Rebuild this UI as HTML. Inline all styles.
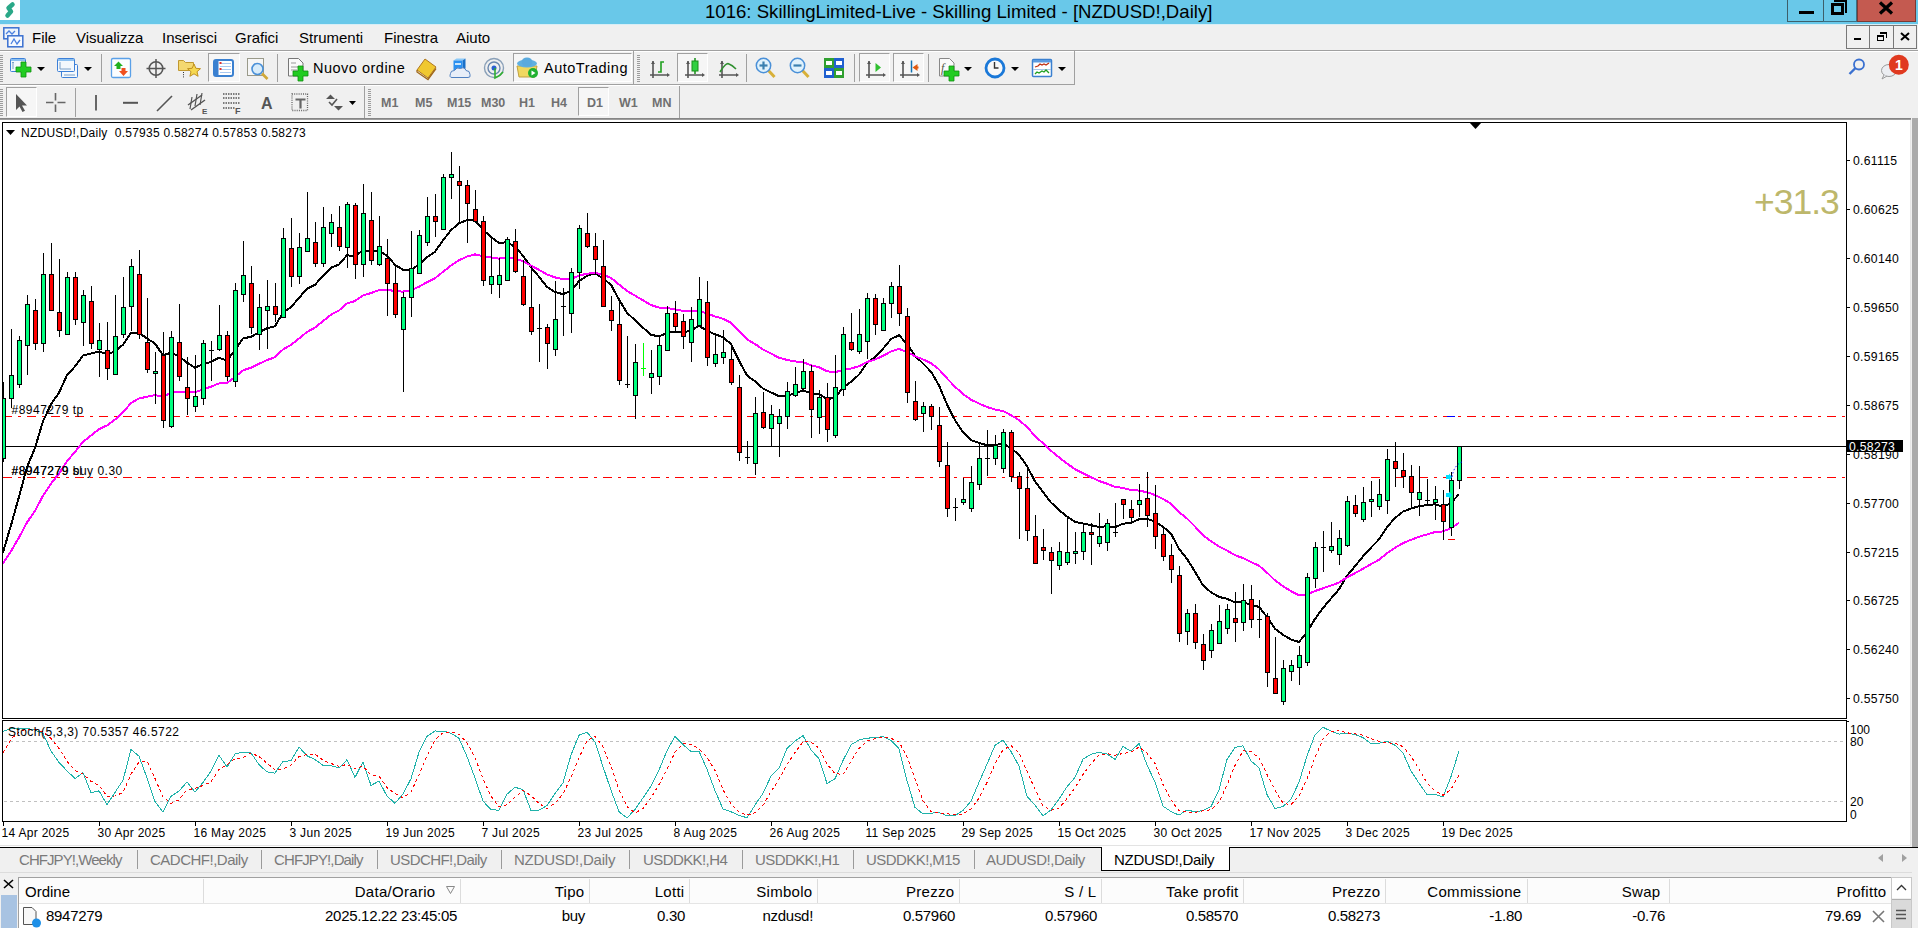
<!DOCTYPE html>
<html><head><meta charset="utf-8">
<style>
*{margin:0;padding:0;box-sizing:border-box}
html,body{width:1918px;height:928px;overflow:hidden;background:#f0f0f0;font-family:"Liberation Sans",sans-serif;color:#000}
.a{position:absolute}
.t{position:absolute;white-space:nowrap;line-height:1}
#title{left:0;top:0;width:1918px;height:24px;background:#69c8e9}
.menu{font-size:15px;top:30px}
.tf{font-size:12.5px;font-weight:bold;color:#707070;top:97px}
.sep{position:absolute;width:1px;background:#a0a0a0}
.pl{font-size:12.2px;left:1853px;letter-spacing:0.3px}
.tl{font-size:12px;top:827px;letter-spacing:0.3px}
.tab{font-size:15px;letter-spacing:-0.3px;color:#7a7a7a;top:852px}
.tsep{position:absolute;top:850px;width:1px;height:19px;background:#9a9a9a}
.th{font-size:15px;top:884px}
.td{font-size:15px;top:907.5px;letter-spacing:-0.3px}
.cdiv{position:absolute;top:879px;width:1px;height:24px;background:#dcdcdc}
</style></head><body>
<!-- title bar -->
<div class="a" id="title"></div>
<div class="a" style="left:0;top:0;width:20px;height:20px;background:#fff"></div>
<svg class="a" style="left:0;top:0" width="20" height="20"><path d="M12.5,4.5 L8.5,8 L11,11.5 L7.5,15.5" fill="none" stroke="#2aa888" stroke-width="4.5" stroke-linejoin="round" stroke-linecap="round"/></svg>
<div class="t" style="left:705px;top:3px;font-size:18.6px">1016: SkillingLimited-Live - Skilling Limited - [NZDUSD!,Daily]</div>
<div class="a" style="left:1787px;top:0;width:37px;height:22px;border:1px solid #3d5f6a;border-top:none"></div>
<div class="a" style="left:1799px;top:11px;width:15px;height:3px;background:#000"></div>
<div class="a" style="left:1823px;top:0;width:34px;height:22px;border:1px solid #3d6f82;border-top:none;border-left:none"></div>
<div class="a" style="left:1831px;top:3px;width:13px;height:12px;border:3px solid #000"></div>
<div class="a" style="left:1834px;top:-1px;width:13px;height:14px;border-top:3px solid #000;border-right:2px solid #000"></div>
<div class="a" style="left:1857px;top:0;width:59px;height:22px;background:#c45a50;border:1px solid #7a3a34;border-top:none"></div>
<svg class="a" style="left:1878px;top:1px" width="16" height="14"><path d="M2,1.5 L14,12.5 M14,1.5 L2,12.5" stroke="#000" stroke-width="3.2"/></svg>

<!-- menu bar -->
<div class="a" style="left:0;top:24px;width:1918px;height:1px;background:#d8eef6"></div>
<svg class="a" style="left:3px;top:27px" width="21" height="21">
<rect x="0.8" y="0.8" width="15" height="11" fill="#eef4fc" stroke="#3a70d0" stroke-width="1.5"/><rect x="4.8" y="8.8" width="15" height="11" fill="#f6f9fe" stroke="#3a70d0" stroke-width="1.5"/>
<path d="M3,7 L6,4 L9,7 L12,4" stroke="#4a80e0" fill="none" stroke-width="1.3"/><path d="M8,17 L11,12 L14,17 L17,13" stroke="#4a80e0" fill="none" stroke-width="1.3"/></svg>
<div class="t menu" style="left:32px">File</div>
<div class="t menu" style="left:76px">Visualizza</div>
<div class="t menu" style="left:162px">Inserisci</div>
<div class="t menu" style="left:235px">Grafici</div>
<div class="t menu" style="left:299px">Strumenti</div>
<div class="t menu" style="left:384px">Finestra</div>
<div class="t menu" style="left:456px">Aiuto</div>
<div class="a" style="left:1846px;top:25px;width:24px;height:24px;border:1px solid #777"></div>
<div class="a" style="left:1869px;top:25px;width:25px;height:24px;border:1px solid #777"></div>
<div class="a" style="left:1893px;top:25px;width:24px;height:24px;border:1px solid #777"></div>
<div class="a" style="left:1854px;top:38px;width:7px;height:2px;background:#000"></div>
<div class="a" style="left:1877px;top:35px;width:7px;height:6px;border:1px solid #000;border-top-width:2px"></div>
<div class="a" style="left:1880px;top:32px;width:7px;height:6px;border-top:2px solid #000;border-right:1px solid #000"></div>
<svg class="a" style="left:1900px;top:32px" width="10" height="9"><path d="M1,1 L9,8 M9,1 L1,8" stroke="#000" stroke-width="2"/></svg>
<div class="a" style="left:0;top:50px;width:1918px;height:1px;background:#a0a0a0"></div>

<!-- toolbar 1 -->
<div class="a" style="left:0;top:51px;width:1918px;height:1px;background:#fff"></div>
<div class="a" style="left:1074px;top:51px;width:1px;height:33px;background:#a0a0a0"></div>
<div class="a" style="left:0px;top:55px;width:3px;height:27px;background:repeating-linear-gradient(#9c9c9c 0 1px,transparent 1px 2px)"></div>
<div class="a" style="left:101px;top:54px;width:1px;height:28px;background:#a0a0a0"></div>
<div class="a" style="left:208px;top:53px;width:32px;height:29px;border-top:1px solid #a0a0a0;border-left:1px solid #a0a0a0;border-right:1px solid #fff;border-bottom:1px solid #fff;background:#f6f6f6"></div>
<div class="a" style="left:277px;top:54px;width:1px;height:28px;background:#a0a0a0"></div>
<div class="a" style="left:513px;top:53px;width:119px;height:29px;border-top:1px solid #a0a0a0;border-left:1px solid #a0a0a0;border-right:1px solid #fff;border-bottom:1px solid #fff;background:#f6f6f6"></div>
<div class="a" style="left:633px;top:51px;width:1px;height:33px;background:#a0a0a0"></div>
<div class="a" style="left:637px;top:55px;width:3px;height:27px;background:repeating-linear-gradient(#9c9c9c 0 1px,transparent 1px 2px)"></div>
<div class="a" style="left:677px;top:53px;width:31px;height:29px;border-top:1px solid #a0a0a0;border-left:1px solid #a0a0a0;border-right:1px solid #fff;border-bottom:1px solid #fff;background:#f6f6f6"></div>
<div class="a" style="left:746px;top:54px;width:1px;height:28px;background:#a0a0a0"></div>
<div class="a" style="left:854px;top:54px;width:1px;height:28px;background:#a0a0a0"></div>
<div class="a" style="left:859px;top:53px;width:31px;height:29px;border-top:1px solid #a0a0a0;border-left:1px solid #a0a0a0;border-right:1px solid #fff;border-bottom:1px solid #fff;background:#f6f6f6"></div>
<div class="a" style="left:893px;top:53px;width:31px;height:29px;border-top:1px solid #a0a0a0;border-left:1px solid #a0a0a0;border-right:1px solid #fff;border-bottom:1px solid #fff;background:#f6f6f6"></div>
<div class="a" style="left:928px;top:54px;width:1px;height:28px;background:#a0a0a0"></div>
<div class="t" style="left:313px;top:61px;font-size:14.5px;letter-spacing:0.5px;color:#000">Nuovo ordine</div>
<div class="t" style="left:544px;top:61px;font-size:14.5px;letter-spacing:0.5px;color:#000">AutoTrading</div>
<svg class="a" style="left:0;top:0" width="1918" height="85"><rect x="10.5" y="58.5" width="15" height="13" rx="1" fill="#f4f8fc" stroke="#3d80d8"/><rect x="11" y="59" width="14" height="2" fill="#8cc0f0"/><path d="M13,62 v7 M12,63 l1,-1 l1,1" stroke="#7aa0c8" fill="none"/><path d="M21,62 h5 v5 h5 v5 h-5 v5 h-5 v-5 h-5 v-5 h5 z" fill="#22cc22" stroke="#109010" stroke-width="0.8"/><path d="M37,67 h8 l-4,4 z" fill="#000"/><rect x="61.5" y="64.5" width="16" height="13" rx="1" fill="#f4f8fc" stroke="#3d80d8"/><rect x="57.5" y="58.5" width="17" height="13" rx="1" fill="#f4f8fc" stroke="#3d80d8"/><rect x="58" y="59" width="16" height="2" fill="#8cc0f0"/><path d="M60,62 v7 h11 M64,75 h11" stroke="#7aa0c8" fill="none"/><path d="M84,67 h8 l-4,4 z" fill="#000"/><rect x="111.5" y="58.5" width="19" height="19" rx="1.5" fill="#fbfdff" stroke="#5aa0e8" stroke-width="1.3"/><path d="M114,66 l4.5,-4.5 l4.5,4.5 h-2.5 v3 h-4 v-3 z" fill="#20b020"/><path d="M119,71 h2.5 v-3 h4 v3 h2.5 l-4.5,5 z" fill="#f05020"/><circle cx="156" cy="68.5" r="6.8" fill="none" stroke="#555" stroke-width="1.6"/><path d="M156,59 v19 M146.5,68.5 h19" stroke="#555" stroke-width="1.5"/><path d="M178.5,60.5 h5 l2,2 h8 v8 h-15 z" fill="#f4d870" stroke="#c09830"/><path d="M194,64 l1.9,4.3 4.6,.4 -3.5,3 1.1,4.6 -4.1,-2.5 -4.1,2.5 1.1,-4.6 -3.5,-3 4.6,-.4 z" fill="#f6d850" stroke="#c09020"/><path d="M183.5,72 v6" stroke="#333" stroke-dasharray="1,1.2"/><rect x="214" y="60" width="19" height="16" rx="2" fill="#fff" stroke="#3a80d0" stroke-width="2"/><rect x="214" y="60" width="4.5" height="16" fill="#3a80d0"/><path d="M220,63.5 h11 M220,66.5 h11 M220,69.5 h11 M220,72.5 h11" stroke="#a8c8f0"/><rect x="219.5" y="62" width="2" height="2" fill="#e03030"/><rect x="219.5" y="68" width="2" height="2" fill="#e03030"/><rect x="247.5" y="58.5" width="16" height="17" fill="#f6f6f6" stroke="#9a9a8a"/><circle cx="257.5" cy="69" r="5.5" fill="#d8ecfa" stroke="#4a90d8" stroke-width="1.6"/><path d="M262,73.5 l5.5,5.5" stroke="#d0a838" stroke-width="2.6"/><path d="M288.5,58.5 h10 l4.5,4.5 v13 h-14.5 z" fill="#fafafa" stroke="#777"/><path d="M291,63 h5 M291,67 h8 M291,70 h6" stroke="#999"/><path d="M298,66 h5 v5 h5 v5 h-5 v5 h-5 v-5 h-5 v-5 h5 z" fill="#22cc22" stroke="#109010" stroke-width="0.8"/><path d="M417,70 l8,-11 l11,8 l-8,11 z" fill="#f0c830" stroke="#b07820"/><path d="M417,70 l0,2 l11,7.5 l8,-11" fill="none" stroke="#a06818" stroke-width="1.3"/><path d="M453.5,60.5 l3,-2 h9 l-3,2 z" fill="#8ccaf8"/><path d="M465.5,58.5 v10 l-3,2 v-10 z" fill="#1a70c8"/><rect x="453.5" y="60.5" width="9" height="10" fill="#2a90f0"/><rect x="455" y="63" width="6" height="2" fill="#c8e4fc"/><path d="M452,77.5 q-3,0 -1.5,-4 q0,-3 4,-3 q2,-4 6,-2 q4,-2 5.5,2 q4,0 4,4 q1,3 -2,3 z" fill="#e8eef8" stroke="#5080c0"/><circle cx="494" cy="68" r="9.5" fill="none" stroke="#8aa0b8" stroke-width="1.4"/><circle cx="494" cy="68" r="6" fill="none" stroke="#6a88b0" stroke-width="1.4"/><circle cx="494" cy="68" r="2.5" fill="#2a60d0"/><path d="M495,68 v10 q5,-2 8,-6" stroke="#30b030" stroke-width="1.6" fill="none"/><path d="M519,77 l-2,-11 h20 l-2,11 z" fill="#f0d860" stroke="#c0a040"/><ellipse cx="527" cy="63.5" rx="10" ry="4" fill="#60b0e0"/><ellipse cx="527" cy="62" rx="5.5" ry="4.5" fill="#5aaade"/><circle cx="533" cy="73" r="5" fill="#20b030"/><path d="M531.5,70.5 l4,2.5 l-4,2.5 z" fill="#fff"/><path d="M653,61 v17 M650,75 h17" stroke="#555" stroke-width="1.6"/><path d="M651,64 l2,-3 l2,3 z M667,73 l3,2 l-3,2 z" fill="#555"/><path d="M658,72 h3 v-10 h3" stroke="#20a020" stroke-width="1.6" fill="none"/><path d="M688,61 v17 M685,75 h17" stroke="#555" stroke-width="1.6"/><path d="M686,64 l2,-3 l2,3 z M702,73 l3,2 l-3,2 z" fill="#555"/><rect x="692" y="61" width="6" height="10" fill="#30d040" stroke="#189018"/><path d="M695,58 v3 M695,71 v3" stroke="#189018" stroke-width="1.5"/><path d="M722,61 v17 M719,75 h17" stroke="#555" stroke-width="1.6"/><path d="M720,64 l2,-3 l2,3 z M736,73 l3,2 l-3,2 z" fill="#555"/><path d="M720,72 q6,-10 9,-8 q3,1 7,5" stroke="#309030" stroke-width="1.6" fill="none"/><path d="M767.5,69.5 l7,7.5" stroke="#d8b038" stroke-width="3"/><circle cx="763.5" cy="65.5" r="7.2" fill="#e0f2fc" stroke="#4a90d8" stroke-width="1.5"/><path d="M759.5,65.5 h8" stroke="#3a80b0" stroke-width="2.2"/><path d="M763.5,61.5 v8" stroke="#3a80b0" stroke-width="2.2"/><path d="M801.5,69.5 l7,7.5" stroke="#d8b038" stroke-width="3"/><circle cx="797.5" cy="65.5" r="7.2" fill="#e0f2fc" stroke="#4a90d8" stroke-width="1.5"/><path d="M793.5,65.5 h8" stroke="#3a80b0" stroke-width="2.2"/><rect x="824" y="58" width="10" height="10" fill="#30a030"/><rect x="834" y="58" width="10" height="10" fill="#2060d0"/><rect x="824" y="68" width="10" height="10" fill="#2060d0"/><rect x="834" y="68" width="10" height="10" fill="#30a030"/><path d="M826,61 h6 v4 h-6 z M836,61 h6 v4 h-6 z M826,71 h6 v4 h-6 z M836,71 h6 v4 h-6 z" fill="#fff"/><path d="M869,61 v17 M866,75 h17" stroke="#555" stroke-width="1.6"/><path d="M867,64 l2,-3 l2,3 z M883,73 l3,2 l-3,2 z" fill="#555"/><path d="M875.5,63 l5.5,4.5 l-5.5,4.5 z" fill="#30c030"/><path d="M903,61 v17 M900,75 h17" stroke="#555" stroke-width="1.6"/><path d="M901,64 l2,-3 l2,3 z M917,73 l3,2 l-3,2 z" fill="#555"/><path d="M911.5,60.5 v12" stroke="#1070b0" stroke-width="1.5"/><path d="M912.5,67.5 l5,-3.5 v2.5 h1 v2 h-1 v2.5 z" fill="#e05a10"/><path d="M939.5,58.5 h10 l4.5,4.5 v13 h-14.5 z" fill="#fafafa" stroke="#888"/><text x="941" y="72" font-family="Liberation Serif" font-size="12" font-style="italic" fill="#554">f</text><path d="M949,66 h5 v5 h5 v5 h-5 v5 h-5 v-5 h-5 v-5 h5 z" fill="#22cc22" stroke="#109010" stroke-width="0.8"/><path d="M964,67 h8 l-4,4 z" fill="#000"/><circle cx="995" cy="68" r="9" fill="#f8f8f8" stroke="#1a78d8" stroke-width="2.8"/><path d="M994.5,62 v6 h4" stroke="#333" stroke-width="1.4" fill="none"/><path d="M1011,67 h8 l-4,4 z" fill="#000"/><rect x="1032.5" y="59.5" width="19" height="17" rx="1" fill="#fff" stroke="#3a80d0" stroke-width="1.5"/><rect x="1033" y="60" width="18" height="2.5" fill="#5a9ae0"/><path d="M1033,69.5 h18" stroke="#a8c8e8"/><path d="M1035,67 l3,-1 l2,-2 l2,1 l2,-1 l2,1 l3,-2" stroke="#c03010" stroke-width="1.3" fill="none"/><path d="M1035,74 l2,-2 l2,1 l3,-2 l2,1 l2,-2 l3,3" stroke="#20a020" stroke-width="1.3" fill="none"/><path d="M1058,67 h8 l-4,4 z" fill="#000"/><circle cx="1859" cy="64.5" r="5" fill="none" stroke="#3a70d0" stroke-width="1.8"/><path d="M1855.5,68 l-6,6" stroke="#3a70d0" stroke-width="2.4"/><ellipse cx="1889" cy="70.5" rx="7.5" ry="6" fill="#eceef2" stroke="#9a9a9a"/><path d="M1884,75 l-2,4 l5,-3" fill="#eceef2" stroke="#9a9a9a"/><circle cx="1898.8" cy="64.8" r="10" fill="#e03a20"/><text x="1898.8" y="70" font-family="Liberation Sans" font-weight="bold" font-size="14" fill="#fff" text-anchor="middle">1</text></svg>
<div class="a" style="left:0;top:84px;width:1075px;height:1px;background:#a0a0a0"></div>
<!-- toolbar 2 -->
<div class="a" style="left:0;top:85px;width:680px;height:1px;background:#fff"></div>
<div class="a" style="left:0px;top:89px;width:3px;height:27px;background:repeating-linear-gradient(#9c9c9c 0 1px,transparent 1px 2px)"></div>
<div class="a" style="left:6px;top:87px;width:31px;height:30px;border-top:1px solid #a0a0a0;border-left:1px solid #a0a0a0;border-right:1px solid #fff;border-bottom:1px solid #fff;background:#f6f6f6"></div>
<div class="a" style="left:75px;top:88px;width:1px;height:29px;background:#a0a0a0"></div>
<div class="a" style="left:364px;top:86px;width:1px;height:32px;background:#a0a0a0"></div>
<div class="a" style="left:368px;top:89px;width:3px;height:27px;background:repeating-linear-gradient(#9c9c9c 0 1px,transparent 1px 2px)"></div>
<div class="a" style="left:578px;top:87px;width:31px;height:29px;border-top:1px solid #a0a0a0;border-left:1px solid #a0a0a0;border-right:1px solid #fff;border-bottom:1px solid #fff;background:#f6f6f6"></div>
<div class="a" style="left:679px;top:86px;width:1px;height:32px;background:#a0a0a0"></div>
<div class="t tf" style="left:381px">M1</div>
<div class="t tf" style="left:415px">M5</div>
<div class="t tf" style="left:447px">M15</div>
<div class="t tf" style="left:481px">M30</div>
<div class="t tf" style="left:519px">H1</div>
<div class="t tf" style="left:551px">H4</div>
<div class="t tf" style="left:587px">D1</div>
<div class="t tf" style="left:619px">W1</div>
<div class="t tf" style="left:652px">MN</div>
<svg class="a" style="left:0;top:0" width="1918" height="120"><path d="M16,94 v16 l3.5,-3.5 l3,5.5 l2.5,-1.3 l-3,-5.2 h5 z" fill="#555"/><path d="M55.5,93 v7.5 M55.5,104.5 v7.5 M46,102.5 h7.5 M57.5,102.5 h8" stroke="#666" stroke-width="1.6"/><path d="M96,95 v15.5" stroke="#666" stroke-width="2"/><path d="M123,102.8 h15" stroke="#555" stroke-width="2"/><path d="M157,111 l15,-15" stroke="#555" stroke-width="1.6"/><path d="M188,105 l14,-10 M191,110 l14,-10" stroke="#555" stroke-width="1.5"/><path d="M192,97 l-2,12 M197,94 l-2,12 M202,93 l-2,12" stroke="#555" stroke-width="1.2"/><text x="202" y="114" font-family="Liberation Sans" font-weight="bold" font-size="8" fill="#555">E</text><path d="M223,94 h17 M223,98 h17 M223,103 h17 M223,108 h12" stroke="#555" stroke-width="1.4" stroke-dasharray="1.5,1"/><text x="235" y="114" font-family="Liberation Sans" font-weight="bold" font-size="9" fill="#555">F</text><text x="261" y="109" font-family="Liberation Sans" font-weight="bold" font-size="16" fill="#555">A</text><rect x="292" y="94" width="15.5" height="16.5" fill="none" stroke="#666" stroke-width="1.3" stroke-dasharray="1,1.2"/><path d="M295.5,99.5 h10 M300.5,99.5 v9" stroke="#666" stroke-width="2.2"/><path d="M326,99 l4.5,-4.5 l4.5,4.5 z M334,106 l4.5,4.5 l4.5,-4.5 z" fill="#555"/><path d="M329,102 l3,3 l5,-6" stroke="#555" stroke-width="1.6" fill="none"/><path d="M349,101 h7 l-3.5,4 z" fill="#000"/></svg>

<!-- MDI frame -->
<div class="a" style="left:0;top:118px;width:1911px;height:2px;background:linear-gradient(#7a7a7a,#a8a8a8)"></div>
<div class="a" style="left:0;top:120px;width:1910px;height:727px;background:#fff"></div>
<div class="a" style="left:0;top:845px;width:1910px;height:1px;background:#e3e3e3"></div>
<div class="a" style="left:1910px;top:120px;width:1px;height:726px;background:#e6e6e6"></div>
<div class="a" style="left:1912px;top:118px;width:6px;height:729px;background:#ababab"></div>

<svg class="a" style="left:0;top:0" width="1918" height="928">
<rect x="2.5" y="122.5" width="1844" height="596" fill="none" stroke="#000"/>
<rect x="2.5" y="720.5" width="1844" height="101" fill="none" stroke="#000"/>
<g id="ticks" stroke="#000"><line x1="1846" y1="160.5" x2="1850" y2="160.5"/>
<line x1="1846" y1="209.5" x2="1850" y2="209.5"/>
<line x1="1846" y1="258.5" x2="1850" y2="258.5"/>
<line x1="1846" y1="307.5" x2="1850" y2="307.5"/>
<line x1="1846" y1="356.5" x2="1850" y2="356.5"/>
<line x1="1846" y1="405.5" x2="1850" y2="405.5"/>
<line x1="1846" y1="454.5" x2="1850" y2="454.5"/>
<line x1="1846" y1="503.5" x2="1850" y2="503.5"/>
<line x1="1846" y1="552.5" x2="1850" y2="552.5"/>
<line x1="1846" y1="600.5" x2="1850" y2="600.5"/>
<line x1="1846" y1="649.5" x2="1850" y2="649.5"/>
<line x1="1846" y1="698.5" x2="1850" y2="698.5"/>
<line x1="1846" y1="721.5" x2="1849" y2="721.5"/>
<line x1="3.5" y1="822" x2="3.5" y2="826"/>
<line x1="99.5" y1="822" x2="99.5" y2="826"/>
<line x1="195.5" y1="822" x2="195.5" y2="826"/>
<line x1="291.5" y1="822" x2="291.5" y2="826"/>
<line x1="387.5" y1="822" x2="387.5" y2="826"/>
<line x1="483.5" y1="822" x2="483.5" y2="826"/>
<line x1="579.5" y1="822" x2="579.5" y2="826"/>
<line x1="675.5" y1="822" x2="675.5" y2="826"/>
<line x1="771.5" y1="822" x2="771.5" y2="826"/>
<line x1="867.5" y1="822" x2="867.5" y2="826"/>
<line x1="963.5" y1="822" x2="963.5" y2="826"/>
<line x1="1059.5" y1="822" x2="1059.5" y2="826"/>
<line x1="1155.5" y1="822" x2="1155.5" y2="826"/>
<line x1="1251.5" y1="822" x2="1251.5" y2="826"/>
<line x1="1347.5" y1="822" x2="1347.5" y2="826"/>
<line x1="1443.5" y1="822" x2="1443.5" y2="826"/></g>
<line x1="3" y1="801.5" x2="1846" y2="801.5" stroke="#c0c0c0" stroke-dasharray="3,3" stroke-dashoffset="5"/>
<line x1="3" y1="741.5" x2="1846" y2="741.5" stroke="#c0c0c0" stroke-dasharray="3,3" stroke-dashoffset="5"/>
<line x1="3" y1="416.5" x2="1846" y2="416.5" stroke="#ff0000" stroke-dasharray="9,6,3,6"/>
<line x1="3" y1="477.5" x2="1846" y2="477.5" stroke="#ff0000" stroke-dasharray="9,6,3,6"/>
<line x1="3" y1="446.5" x2="1846" y2="446.5" stroke="#000"/>
<svg x="3" y="123" width="1843" height="595" viewBox="3 123 1843 595" overflow="hidden">
<polyline points="3.0,552.4 11.0,525.2 19.0,496.7 27.0,467.1 35.0,448.0 43.0,421.3 51.0,404.2 59.0,392.8 67.0,375.1 75.0,366.5 83.0,355.5 91.0,353.6 99.0,351.6 107.0,354.1 115.0,351.4 123.0,344.7 131.0,332.6 139.0,332.8 147.0,338.5 155.0,343.5 163.0,355.4 171.0,352.6 179.0,356.2 187.0,362.7 195.0,367.8 203.0,364.0 211.0,361.9 219.0,357.8 227.0,360.7 235.0,349.9 243.0,338.4 251.0,336.8 259.0,332.3 267.0,328.3 275.0,326.2 283.0,312.6 291.0,307.1 299.0,297.9 307.0,288.7 315.0,284.8 323.0,275.9 331.0,267.7 339.0,264.5 347.0,255.2 355.0,256.7 363.0,250.0 371.0,251.5 379.0,250.8 387.0,255.7 395.0,264.8 403.0,269.9 411.0,269.7 419.0,264.5 427.0,257.2 435.0,251.7 443.0,240.3 451.0,230.2 459.0,223.3 467.0,220.2 475.0,220.5 483.0,229.7 491.0,236.9 499.0,242.9 507.0,242.3 515.0,246.9 523.0,255.7 531.0,267.3 539.0,276.7 547.0,286.9 555.0,292.0 563.0,294.2 571.0,290.8 579.0,281.2 587.0,275.9 595.0,273.3 603.0,278.4 611.0,284.8 619.0,299.6 627.0,312.7 635.0,320.3 643.0,327.7 651.0,334.8 659.0,336.4 667.0,332.9 675.0,331.9 683.0,332.6 691.0,330.6 699.0,325.8 707.0,330.7 715.0,334.3 723.0,337.1 731.0,344.1 739.0,360.7 747.0,375.5 755.0,381.3 763.0,388.4 771.0,392.4 779.0,396.1 787.0,395.4 795.0,393.7 803.0,390.3 811.0,393.3 819.0,393.9 827.0,399.3 835.0,397.5 843.0,387.8 851.0,381.9 859.0,374.6 867.0,362.9 875.0,357.0 883.0,348.7 891.0,339.1 899.0,335.2 907.0,344.0 915.0,355.7 923.0,363.5 931.0,371.6 939.0,385.4 947.0,404.4 955.0,420.2 963.0,432.4 971.0,440.1 979.0,442.9 987.0,445.3 995.0,445.3 1003.0,443.4 1011.0,448.5 1019.0,454.6 1027.0,466.3 1035.0,481.2 1043.0,491.9 1051.0,502.5 1059.0,510.0 1067.0,516.5 1075.0,521.9 1083.0,523.5 1091.0,525.2 1099.0,526.9 1107.0,526.3 1115.0,527.2 1123.0,523.7 1131.0,522.8 1139.0,519.3 1147.0,518.8 1155.0,521.5 1163.0,526.9 1171.0,533.5 1179.0,548.9 1187.0,558.8 1195.0,571.7 1203.0,585.4 1211.0,592.3 1219.0,596.9 1227.0,598.8 1235.0,602.4 1243.0,602.1 1251.0,604.7 1259.0,606.9 1267.0,617.0 1275.0,628.7 1283.0,634.8 1291.0,639.5 1299.0,642.0 1307.0,632.0 1315.0,619.0 1323.0,608.0 1331.0,598.5 1339.0,589.3 1347.0,575.8 1355.0,566.2 1363.0,556.4 1371.0,547.6 1379.0,539.4 1387.0,527.1 1395.0,518.0 1403.0,511.6 1411.0,508.6 1419.0,506.1 1427.0,505.2 1435.0,504.3 1443.0,506.9 1451.0,502.9 1459.0,494.2" fill="none" stroke="#000" stroke-width="2" stroke-linejoin="round" shape-rendering="crispEdges"/><polyline points="3.0,563.2 11.0,551.1 19.0,537.5 27.0,522.4 35.0,510.9 43.0,495.6 51.0,483.6 59.0,473.7 67.0,461.1 75.0,451.9 83.0,441.8 91.0,435.5 99.0,429.3 107.0,425.4 115.0,419.6 123.0,412.4 131.0,403.0 139.0,398.5 147.0,396.7 155.0,395.0 163.0,396.7 171.0,392.8 179.0,391.8 187.0,392.2 195.0,392.4 203.0,389.3 211.0,386.7 219.0,383.4 227.0,383.0 235.0,377.0 243.0,370.4 251.0,367.7 259.0,363.8 267.0,360.1 275.0,357.2 283.0,349.5 291.0,344.8 299.0,338.5 307.0,332.0 315.0,327.6 323.0,321.1 331.0,314.7 339.0,310.4 347.0,303.5 355.0,301.0 363.0,295.4 371.0,293.1 379.0,290.1 387.0,289.6 395.0,291.2 403.0,291.6 411.0,290.2 419.0,286.7 427.0,282.2 435.0,278.2 443.0,271.8 451.0,265.5 459.0,260.3 467.0,256.6 475.0,254.4 483.0,256.1 491.0,257.4 499.0,258.6 507.0,257.3 515.0,258.3 523.0,261.2 531.0,265.7 539.0,269.8 547.0,274.5 555.0,277.4 563.0,279.3 571.0,278.9 579.0,275.6 587.0,273.7 595.0,272.8 603.0,274.9 611.0,277.8 619.0,284.5 627.0,291.0 635.0,295.6 643.0,300.3 651.0,305.0 659.0,307.6 667.0,308.0 675.0,309.2 683.0,311.0 691.0,311.5 699.0,310.7 707.0,313.7 715.0,316.4 723.0,318.7 731.0,322.8 739.0,331.1 747.0,339.3 755.0,344.0 763.0,349.4 771.0,353.6 779.0,357.7 787.0,359.9 795.0,361.4 803.0,362.1 811.0,365.2 819.0,367.2 827.0,371.2 835.0,372.3 843.0,369.8 851.0,368.5 859.0,366.3 867.0,362.0 875.0,359.5 883.0,355.9 891.0,351.4 899.0,349.0 907.0,351.8 915.0,356.2 923.0,359.4 931.0,363.1 939.0,369.4 947.0,378.4 955.0,386.7 963.0,394.0 971.0,399.7 979.0,403.5 987.0,407.0 995.0,409.5 1003.0,411.0 1011.0,415.2 1019.0,420.0 1027.0,427.1 1035.0,435.9 1043.0,443.3 1051.0,450.8 1059.0,457.3 1067.0,463.5 1075.0,469.2 1083.0,473.2 1091.0,477.2 1099.0,481.0 1107.0,483.7 1115.0,486.8 1123.0,488.0 1131.0,489.9 1139.0,490.6 1147.0,492.2 1155.0,495.0 1163.0,499.0 1171.0,503.6 1179.0,512.0 1187.0,518.5 1195.0,526.5 1203.0,535.2 1211.0,541.3 1219.0,546.5 1227.0,550.6 1235.0,555.2 1243.0,558.1 1251.0,562.0 1259.0,565.7 1267.0,572.6 1275.0,580.4 1283.0,586.1 1291.0,591.2 1299.0,595.3 1307.0,594.2 1315.0,591.1 1323.0,588.3 1331.0,585.6 1339.0,582.6 1347.0,577.4 1355.0,573.2 1363.0,568.7 1371.0,564.2 1379.0,559.7 1387.0,553.2 1395.0,547.7 1403.0,543.1 1411.0,539.8 1419.0,536.7 1427.0,534.4 1435.0,532.1 1443.0,531.4 1451.0,528.2 1459.0,522.9" fill="none" stroke="#ff00ff" stroke-width="2" stroke-linejoin="round" shape-rendering="crispEdges"/>
<rect x="3" y="382" width="1" height="80" fill="#000"/>
<rect x="1" y="398" width="5" height="61" fill="#000"/>
<rect x="2" y="399" width="3" height="59" fill="#00ff7f"/>
<rect x="11" y="329" width="1" height="79" fill="#000"/>
<rect x="9" y="375" width="5" height="24" fill="#000"/>
<rect x="10" y="376" width="3" height="22" fill="#00ff7f"/>
<rect x="19" y="336" width="1" height="52" fill="#000"/>
<rect x="17" y="340" width="5" height="45" fill="#000"/>
<rect x="18" y="341" width="3" height="43" fill="#00ff7f"/>
<rect x="27" y="295" width="1" height="80" fill="#000"/>
<rect x="25" y="304" width="5" height="42" fill="#000"/>
<rect x="26" y="305" width="3" height="40" fill="#00ff7f"/>
<rect x="35" y="299" width="1" height="51" fill="#000"/>
<rect x="33" y="310" width="5" height="34" fill="#000"/>
<rect x="34" y="311" width="3" height="32" fill="#ff0000"/>
<rect x="43" y="253" width="1" height="99" fill="#000"/>
<rect x="41" y="274" width="5" height="70" fill="#000"/>
<rect x="42" y="275" width="3" height="68" fill="#00ff7f"/>
<rect x="51" y="243" width="1" height="68" fill="#000"/>
<rect x="49" y="274" width="5" height="37" fill="#000"/>
<rect x="50" y="275" width="3" height="35" fill="#ff0000"/>
<rect x="59" y="259" width="1" height="78" fill="#000"/>
<rect x="57" y="312" width="5" height="19" fill="#000"/>
<rect x="58" y="313" width="3" height="17" fill="#ff0000"/>
<rect x="67" y="272" width="1" height="63" fill="#000"/>
<rect x="65" y="277" width="5" height="58" fill="#000"/>
<rect x="66" y="278" width="3" height="56" fill="#00ff7f"/>
<rect x="75" y="272" width="1" height="53" fill="#000"/>
<rect x="73" y="277" width="5" height="43" fill="#000"/>
<rect x="74" y="278" width="3" height="41" fill="#ff0000"/>
<rect x="83" y="290" width="1" height="56" fill="#000"/>
<rect x="81" y="295" width="5" height="28" fill="#000"/>
<rect x="82" y="296" width="3" height="26" fill="#00ff7f"/>
<rect x="91" y="286" width="1" height="63" fill="#000"/>
<rect x="89" y="301" width="5" height="43" fill="#000"/>
<rect x="90" y="302" width="3" height="41" fill="#ff0000"/>
<rect x="99" y="323" width="1" height="54" fill="#000"/>
<rect x="97" y="340" width="5" height="10" fill="#000"/>
<rect x="98" y="341" width="3" height="8" fill="#00ff7f"/>
<rect x="107" y="322" width="1" height="58" fill="#000"/>
<rect x="105" y="350" width="5" height="19" fill="#000"/>
<rect x="106" y="351" width="3" height="17" fill="#ff0000"/>
<rect x="115" y="295" width="1" height="80" fill="#000"/>
<rect x="113" y="336" width="5" height="39" fill="#000"/>
<rect x="114" y="337" width="3" height="37" fill="#00ff7f"/>
<rect x="123" y="277" width="1" height="61" fill="#000"/>
<rect x="121" y="307" width="5" height="28" fill="#000"/>
<rect x="122" y="308" width="3" height="26" fill="#00ff7f"/>
<rect x="131" y="259" width="1" height="72" fill="#000"/>
<rect x="129" y="266" width="5" height="41" fill="#000"/>
<rect x="130" y="267" width="3" height="39" fill="#00ff7f"/>
<rect x="139" y="250" width="1" height="89" fill="#000"/>
<rect x="137" y="274" width="5" height="61" fill="#000"/>
<rect x="138" y="275" width="3" height="59" fill="#ff0000"/>
<rect x="147" y="298" width="1" height="75" fill="#000"/>
<rect x="145" y="342" width="5" height="28" fill="#000"/>
<rect x="146" y="343" width="3" height="26" fill="#ff0000"/>
<rect x="155" y="352" width="1" height="52" fill="#000"/>
<rect x="153" y="371" width="5" height="3" fill="#000"/>
<rect x="154" y="372" width="3" height="1" fill="#00ff7f"/>
<rect x="163" y="332" width="1" height="96" fill="#000"/>
<rect x="161" y="355" width="5" height="66" fill="#000"/>
<rect x="162" y="356" width="3" height="64" fill="#ff0000"/>
<rect x="171" y="331" width="1" height="97" fill="#000"/>
<rect x="169" y="337" width="5" height="90" fill="#000"/>
<rect x="170" y="338" width="3" height="88" fill="#00ff7f"/>
<rect x="179" y="304" width="1" height="77" fill="#000"/>
<rect x="177" y="342" width="5" height="35" fill="#000"/>
<rect x="178" y="343" width="3" height="33" fill="#ff0000"/>
<rect x="187" y="357" width="1" height="58" fill="#000"/>
<rect x="185" y="387" width="5" height="12" fill="#000"/>
<rect x="186" y="388" width="3" height="10" fill="#ff0000"/>
<rect x="195" y="355" width="1" height="57" fill="#000"/>
<rect x="193" y="396" width="5" height="11" fill="#000"/>
<rect x="194" y="397" width="3" height="9" fill="#00ff7f"/>
<rect x="203" y="340" width="1" height="65" fill="#000"/>
<rect x="201" y="343" width="5" height="56" fill="#000"/>
<rect x="202" y="344" width="3" height="54" fill="#00ff7f"/>
<rect x="211" y="341" width="1" height="40" fill="#000"/>
<rect x="209" y="350" width="5" height="1" fill="#000"/>
<rect x="219" y="305" width="1" height="46" fill="#000"/>
<rect x="217" y="335" width="5" height="15" fill="#000"/>
<rect x="218" y="336" width="3" height="13" fill="#00ff7f"/>
<rect x="227" y="331" width="1" height="50" fill="#000"/>
<rect x="225" y="335" width="5" height="42" fill="#000"/>
<rect x="226" y="336" width="3" height="40" fill="#ff0000"/>
<rect x="235" y="283" width="1" height="104" fill="#000"/>
<rect x="233" y="290" width="5" height="92" fill="#000"/>
<rect x="234" y="291" width="3" height="90" fill="#00ff7f"/>
<rect x="243" y="241" width="1" height="61" fill="#000"/>
<rect x="241" y="275" width="5" height="20" fill="#000"/>
<rect x="242" y="276" width="3" height="18" fill="#00ff7f"/>
<rect x="251" y="266" width="1" height="68" fill="#000"/>
<rect x="249" y="283" width="5" height="45" fill="#000"/>
<rect x="250" y="284" width="3" height="43" fill="#ff0000"/>
<rect x="259" y="294" width="1" height="56" fill="#000"/>
<rect x="257" y="307" width="5" height="28" fill="#000"/>
<rect x="258" y="308" width="3" height="26" fill="#00ff7f"/>
<rect x="267" y="280" width="1" height="69" fill="#000"/>
<rect x="265" y="306" width="5" height="5" fill="#000"/>
<rect x="266" y="307" width="3" height="3" fill="#00ff7f"/>
<rect x="275" y="283" width="1" height="39" fill="#000"/>
<rect x="273" y="306" width="5" height="9" fill="#000"/>
<rect x="274" y="307" width="3" height="7" fill="#ff0000"/>
<rect x="283" y="228" width="1" height="90" fill="#000"/>
<rect x="281" y="238" width="5" height="80" fill="#000"/>
<rect x="282" y="239" width="3" height="78" fill="#00ff7f"/>
<rect x="291" y="218" width="1" height="69" fill="#000"/>
<rect x="289" y="248" width="5" height="29" fill="#000"/>
<rect x="290" y="249" width="3" height="27" fill="#ff0000"/>
<rect x="299" y="233" width="1" height="51" fill="#000"/>
<rect x="297" y="247" width="5" height="30" fill="#000"/>
<rect x="298" y="248" width="3" height="28" fill="#00ff7f"/>
<rect x="307" y="192" width="1" height="60" fill="#000"/>
<rect x="305" y="238" width="5" height="14" fill="#000"/>
<rect x="306" y="239" width="3" height="12" fill="#00ff7f"/>
<rect x="315" y="222" width="1" height="45" fill="#000"/>
<rect x="313" y="242" width="5" height="22" fill="#000"/>
<rect x="314" y="243" width="3" height="20" fill="#ff0000"/>
<rect x="323" y="207" width="1" height="60" fill="#000"/>
<rect x="321" y="227" width="5" height="37" fill="#000"/>
<rect x="322" y="228" width="3" height="35" fill="#00ff7f"/>
<rect x="331" y="214" width="1" height="33" fill="#000"/>
<rect x="329" y="222" width="5" height="12" fill="#000"/>
<rect x="330" y="223" width="3" height="10" fill="#00ff7f"/>
<rect x="339" y="206" width="1" height="45" fill="#000"/>
<rect x="337" y="227" width="5" height="20" fill="#000"/>
<rect x="338" y="228" width="3" height="18" fill="#ff0000"/>
<rect x="347" y="202" width="1" height="66" fill="#000"/>
<rect x="345" y="204" width="5" height="44" fill="#000"/>
<rect x="346" y="205" width="3" height="42" fill="#00ff7f"/>
<rect x="355" y="203" width="1" height="76" fill="#000"/>
<rect x="353" y="205" width="5" height="60" fill="#000"/>
<rect x="354" y="206" width="3" height="58" fill="#ff0000"/>
<rect x="363" y="184" width="1" height="93" fill="#000"/>
<rect x="361" y="213" width="5" height="52" fill="#000"/>
<rect x="362" y="214" width="3" height="50" fill="#00ff7f"/>
<rect x="371" y="192" width="1" height="73" fill="#000"/>
<rect x="369" y="220" width="5" height="41" fill="#000"/>
<rect x="370" y="221" width="3" height="39" fill="#ff0000"/>
<rect x="379" y="216" width="1" height="50" fill="#000"/>
<rect x="377" y="246" width="5" height="19" fill="#000"/>
<rect x="378" y="247" width="3" height="17" fill="#00ff7f"/>
<rect x="387" y="239" width="1" height="77" fill="#000"/>
<rect x="385" y="258" width="5" height="26" fill="#000"/>
<rect x="386" y="259" width="3" height="24" fill="#ff0000"/>
<rect x="395" y="264" width="1" height="54" fill="#000"/>
<rect x="393" y="283" width="5" height="32" fill="#000"/>
<rect x="394" y="284" width="3" height="30" fill="#ff0000"/>
<rect x="403" y="292" width="1" height="100" fill="#000"/>
<rect x="401" y="297" width="5" height="33" fill="#000"/>
<rect x="402" y="298" width="3" height="31" fill="#00ff7f"/>
<rect x="411" y="231" width="1" height="86" fill="#000"/>
<rect x="409" y="268" width="5" height="30" fill="#000"/>
<rect x="410" y="269" width="3" height="28" fill="#00ff7f"/>
<rect x="419" y="230" width="1" height="44" fill="#000"/>
<rect x="417" y="235" width="5" height="39" fill="#000"/>
<rect x="418" y="236" width="3" height="37" fill="#00ff7f"/>
<rect x="427" y="197" width="1" height="49" fill="#000"/>
<rect x="425" y="216" width="5" height="27" fill="#000"/>
<rect x="426" y="217" width="3" height="25" fill="#00ff7f"/>
<rect x="435" y="194" width="1" height="43" fill="#000"/>
<rect x="433" y="216" width="5" height="6" fill="#000"/>
<rect x="434" y="217" width="3" height="4" fill="#ff0000"/>
<rect x="443" y="174" width="1" height="56" fill="#000"/>
<rect x="441" y="177" width="5" height="53" fill="#000"/>
<rect x="442" y="178" width="3" height="51" fill="#00ff7f"/>
<rect x="451" y="152" width="1" height="47" fill="#000"/>
<rect x="449" y="174" width="5" height="4" fill="#000"/>
<rect x="450" y="175" width="3" height="2" fill="#00ff7f"/>
<rect x="459" y="166" width="1" height="57" fill="#000"/>
<rect x="457" y="181" width="5" height="5" fill="#000"/>
<rect x="458" y="182" width="3" height="3" fill="#ff0000"/>
<rect x="467" y="180" width="1" height="63" fill="#000"/>
<rect x="465" y="185" width="5" height="19" fill="#000"/>
<rect x="466" y="186" width="3" height="17" fill="#ff0000"/>
<rect x="475" y="190" width="1" height="33" fill="#000"/>
<rect x="473" y="209" width="5" height="13" fill="#000"/>
<rect x="474" y="210" width="3" height="11" fill="#ff0000"/>
<rect x="483" y="216" width="1" height="70" fill="#000"/>
<rect x="481" y="221" width="5" height="60" fill="#000"/>
<rect x="482" y="222" width="3" height="58" fill="#ff0000"/>
<rect x="491" y="237" width="1" height="57" fill="#000"/>
<rect x="489" y="276" width="5" height="9" fill="#000"/>
<rect x="490" y="277" width="3" height="7" fill="#00ff7f"/>
<rect x="499" y="258" width="1" height="40" fill="#000"/>
<rect x="497" y="275" width="5" height="10" fill="#000"/>
<rect x="498" y="276" width="3" height="8" fill="#00ff7f"/>
<rect x="507" y="237" width="1" height="44" fill="#000"/>
<rect x="505" y="239" width="5" height="42" fill="#000"/>
<rect x="506" y="240" width="3" height="40" fill="#00ff7f"/>
<rect x="515" y="229" width="1" height="44" fill="#000"/>
<rect x="513" y="241" width="5" height="31" fill="#000"/>
<rect x="514" y="242" width="3" height="29" fill="#ff0000"/>
<rect x="523" y="260" width="1" height="46" fill="#000"/>
<rect x="521" y="276" width="5" height="29" fill="#000"/>
<rect x="522" y="277" width="3" height="27" fill="#ff0000"/>
<rect x="531" y="266" width="1" height="69" fill="#000"/>
<rect x="529" y="307" width="5" height="25" fill="#000"/>
<rect x="530" y="308" width="3" height="23" fill="#ff0000"/>
<rect x="539" y="304" width="1" height="58" fill="#000"/>
<rect x="537" y="328" width="5" height="1" fill="#000"/>
<rect x="547" y="324" width="1" height="45" fill="#000"/>
<rect x="545" y="327" width="5" height="17" fill="#000"/>
<rect x="546" y="328" width="3" height="15" fill="#ff0000"/>
<rect x="555" y="281" width="1" height="75" fill="#000"/>
<rect x="553" y="319" width="5" height="31" fill="#000"/>
<rect x="554" y="320" width="3" height="29" fill="#00ff7f"/>
<rect x="563" y="288" width="1" height="48" fill="#000"/>
<rect x="561" y="306" width="5" height="1" fill="#000"/>
<rect x="571" y="268" width="1" height="65" fill="#000"/>
<rect x="569" y="272" width="5" height="42" fill="#000"/>
<rect x="570" y="273" width="3" height="40" fill="#00ff7f"/>
<rect x="579" y="225" width="1" height="64" fill="#000"/>
<rect x="577" y="228" width="5" height="45" fill="#000"/>
<rect x="578" y="229" width="3" height="43" fill="#00ff7f"/>
<rect x="587" y="213" width="1" height="35" fill="#000"/>
<rect x="585" y="233" width="5" height="14" fill="#000"/>
<rect x="586" y="234" width="3" height="12" fill="#ff0000"/>
<rect x="595" y="233" width="1" height="42" fill="#000"/>
<rect x="593" y="246" width="5" height="14" fill="#000"/>
<rect x="594" y="247" width="3" height="12" fill="#ff0000"/>
<rect x="603" y="240" width="1" height="67" fill="#000"/>
<rect x="601" y="266" width="5" height="41" fill="#000"/>
<rect x="602" y="267" width="3" height="39" fill="#ff0000"/>
<rect x="611" y="296" width="1" height="35" fill="#000"/>
<rect x="609" y="310" width="5" height="11" fill="#000"/>
<rect x="610" y="311" width="3" height="9" fill="#ff0000"/>
<rect x="619" y="299" width="1" height="86" fill="#000"/>
<rect x="617" y="324" width="5" height="57" fill="#000"/>
<rect x="618" y="325" width="3" height="55" fill="#ff0000"/>
<rect x="627" y="336" width="1" height="52" fill="#000"/>
<rect x="625" y="384" width="5" height="1" fill="#000"/>
<rect x="635" y="344" width="1" height="75" fill="#000"/>
<rect x="633" y="362" width="5" height="34" fill="#000"/>
<rect x="634" y="363" width="3" height="32" fill="#00ff7f"/>
<rect x="643" y="343" width="1" height="33" fill="#00ff00"/>
<rect x="641" y="368" width="5" height="1" fill="#00ff00"/>
<rect x="651" y="350" width="1" height="44" fill="#000"/>
<rect x="649" y="373" width="5" height="5" fill="#000"/>
<rect x="650" y="374" width="3" height="3" fill="#00ff7f"/>
<rect x="659" y="336" width="1" height="49" fill="#000"/>
<rect x="657" y="345" width="5" height="32" fill="#000"/>
<rect x="658" y="346" width="3" height="30" fill="#00ff7f"/>
<rect x="667" y="306" width="1" height="45" fill="#000"/>
<rect x="665" y="313" width="5" height="38" fill="#000"/>
<rect x="666" y="314" width="3" height="36" fill="#00ff7f"/>
<rect x="675" y="301" width="1" height="30" fill="#000"/>
<rect x="673" y="313" width="5" height="14" fill="#000"/>
<rect x="674" y="314" width="3" height="12" fill="#ff0000"/>
<rect x="683" y="314" width="1" height="35" fill="#000"/>
<rect x="681" y="321" width="5" height="16" fill="#000"/>
<rect x="682" y="322" width="3" height="14" fill="#ff0000"/>
<rect x="691" y="307" width="1" height="55" fill="#000"/>
<rect x="689" y="319" width="5" height="24" fill="#000"/>
<rect x="690" y="320" width="3" height="22" fill="#00ff7f"/>
<rect x="699" y="277" width="1" height="50" fill="#000"/>
<rect x="697" y="299" width="5" height="27" fill="#000"/>
<rect x="698" y="300" width="3" height="25" fill="#00ff7f"/>
<rect x="707" y="281" width="1" height="85" fill="#000"/>
<rect x="705" y="302" width="5" height="56" fill="#000"/>
<rect x="706" y="303" width="3" height="54" fill="#ff0000"/>
<rect x="715" y="336" width="1" height="31" fill="#000"/>
<rect x="713" y="354" width="5" height="10" fill="#000"/>
<rect x="714" y="355" width="3" height="8" fill="#00ff7f"/>
<rect x="723" y="330" width="1" height="34" fill="#000"/>
<rect x="721" y="352" width="5" height="6" fill="#000"/>
<rect x="722" y="353" width="3" height="4" fill="#00ff7f"/>
<rect x="731" y="346" width="1" height="39" fill="#000"/>
<rect x="729" y="359" width="5" height="24" fill="#000"/>
<rect x="730" y="360" width="3" height="22" fill="#ff0000"/>
<rect x="739" y="375" width="1" height="86" fill="#000"/>
<rect x="737" y="387" width="5" height="66" fill="#000"/>
<rect x="738" y="388" width="3" height="64" fill="#ff0000"/>
<rect x="747" y="441" width="1" height="23" fill="#000"/>
<rect x="745" y="457" width="5" height="1" fill="#000"/>
<rect x="755" y="397" width="1" height="78" fill="#000"/>
<rect x="753" y="413" width="5" height="51" fill="#000"/>
<rect x="754" y="414" width="3" height="49" fill="#00ff7f"/>
<rect x="763" y="392" width="1" height="37" fill="#000"/>
<rect x="761" y="412" width="5" height="16" fill="#000"/>
<rect x="762" y="413" width="3" height="14" fill="#ff0000"/>
<rect x="771" y="405" width="1" height="42" fill="#000"/>
<rect x="769" y="414" width="5" height="15" fill="#000"/>
<rect x="770" y="415" width="3" height="13" fill="#00ff7f"/>
<rect x="779" y="409" width="1" height="48" fill="#000"/>
<rect x="777" y="416" width="5" height="8" fill="#000"/>
<rect x="778" y="417" width="3" height="6" fill="#00ff7f"/>
<rect x="787" y="382" width="1" height="47" fill="#000"/>
<rect x="785" y="391" width="5" height="26" fill="#000"/>
<rect x="786" y="392" width="3" height="24" fill="#00ff7f"/>
<rect x="795" y="367" width="1" height="30" fill="#000"/>
<rect x="793" y="384" width="5" height="12" fill="#000"/>
<rect x="794" y="385" width="3" height="10" fill="#00ff7f"/>
<rect x="803" y="359" width="1" height="31" fill="#000"/>
<rect x="801" y="371" width="5" height="18" fill="#000"/>
<rect x="802" y="372" width="3" height="16" fill="#00ff7f"/>
<rect x="811" y="365" width="1" height="73" fill="#000"/>
<rect x="809" y="371" width="5" height="39" fill="#000"/>
<rect x="810" y="372" width="3" height="37" fill="#ff0000"/>
<rect x="819" y="390" width="1" height="44" fill="#000"/>
<rect x="817" y="397" width="5" height="21" fill="#000"/>
<rect x="818" y="398" width="3" height="19" fill="#00ff7f"/>
<rect x="827" y="383" width="1" height="59" fill="#000"/>
<rect x="825" y="397" width="5" height="33" fill="#000"/>
<rect x="826" y="398" width="3" height="31" fill="#ff0000"/>
<rect x="835" y="355" width="1" height="83" fill="#000"/>
<rect x="833" y="387" width="5" height="49" fill="#000"/>
<rect x="834" y="388" width="3" height="47" fill="#00ff7f"/>
<rect x="843" y="327" width="1" height="69" fill="#000"/>
<rect x="841" y="334" width="5" height="56" fill="#000"/>
<rect x="842" y="335" width="3" height="54" fill="#00ff7f"/>
<rect x="851" y="313" width="1" height="38" fill="#000"/>
<rect x="849" y="342" width="5" height="8" fill="#000"/>
<rect x="850" y="343" width="3" height="6" fill="#ff0000"/>
<rect x="859" y="309" width="1" height="45" fill="#000"/>
<rect x="857" y="334" width="5" height="18" fill="#000"/>
<rect x="858" y="335" width="3" height="16" fill="#00ff7f"/>
<rect x="867" y="293" width="1" height="66" fill="#000"/>
<rect x="865" y="298" width="5" height="44" fill="#000"/>
<rect x="866" y="299" width="3" height="42" fill="#00ff7f"/>
<rect x="875" y="294" width="1" height="41" fill="#000"/>
<rect x="873" y="298" width="5" height="27" fill="#000"/>
<rect x="874" y="299" width="3" height="25" fill="#ff0000"/>
<rect x="883" y="298" width="1" height="33" fill="#000"/>
<rect x="881" y="303" width="5" height="28" fill="#000"/>
<rect x="882" y="304" width="3" height="26" fill="#00ff7f"/>
<rect x="891" y="282" width="1" height="36" fill="#000"/>
<rect x="889" y="286" width="5" height="18" fill="#000"/>
<rect x="890" y="287" width="3" height="16" fill="#00ff7f"/>
<rect x="899" y="265" width="1" height="61" fill="#000"/>
<rect x="897" y="286" width="5" height="28" fill="#000"/>
<rect x="898" y="287" width="3" height="26" fill="#ff0000"/>
<rect x="907" y="308" width="1" height="95" fill="#000"/>
<rect x="905" y="316" width="5" height="77" fill="#000"/>
<rect x="906" y="317" width="3" height="75" fill="#ff0000"/>
<rect x="915" y="381" width="1" height="40" fill="#000"/>
<rect x="913" y="401" width="5" height="19" fill="#000"/>
<rect x="914" y="402" width="3" height="17" fill="#ff0000"/>
<rect x="923" y="402" width="1" height="30" fill="#000"/>
<rect x="921" y="406" width="5" height="8" fill="#000"/>
<rect x="922" y="407" width="3" height="6" fill="#00ff7f"/>
<rect x="931" y="404" width="1" height="26" fill="#000"/>
<rect x="929" y="406" width="5" height="11" fill="#000"/>
<rect x="930" y="407" width="3" height="9" fill="#ff0000"/>
<rect x="939" y="407" width="1" height="60" fill="#000"/>
<rect x="937" y="425" width="5" height="37" fill="#000"/>
<rect x="938" y="426" width="3" height="35" fill="#ff0000"/>
<rect x="947" y="442" width="1" height="75" fill="#000"/>
<rect x="945" y="465" width="5" height="44" fill="#000"/>
<rect x="946" y="466" width="3" height="42" fill="#ff0000"/>
<rect x="955" y="498" width="1" height="23" fill="#000"/>
<rect x="953" y="507" width="5" height="1" fill="#000"/>
<rect x="963" y="478" width="1" height="27" fill="#000"/>
<rect x="961" y="499" width="5" height="4" fill="#000"/>
<rect x="962" y="500" width="3" height="2" fill="#00ff7f"/>
<rect x="971" y="466" width="1" height="46" fill="#000"/>
<rect x="969" y="482" width="5" height="27" fill="#000"/>
<rect x="970" y="483" width="3" height="25" fill="#00ff7f"/>
<rect x="979" y="444" width="1" height="46" fill="#000"/>
<rect x="977" y="458" width="5" height="27" fill="#000"/>
<rect x="978" y="459" width="3" height="25" fill="#00ff7f"/>
<rect x="987" y="430" width="1" height="46" fill="#000"/>
<rect x="985" y="458" width="5" height="1" fill="#000"/>
<rect x="995" y="435" width="1" height="30" fill="#000"/>
<rect x="993" y="445" width="5" height="14" fill="#000"/>
<rect x="994" y="446" width="3" height="12" fill="#00ff7f"/>
<rect x="1003" y="429" width="1" height="44" fill="#000"/>
<rect x="1001" y="432" width="5" height="37" fill="#000"/>
<rect x="1002" y="433" width="3" height="35" fill="#00ff7f"/>
<rect x="1011" y="430" width="1" height="52" fill="#000"/>
<rect x="1009" y="432" width="5" height="45" fill="#000"/>
<rect x="1010" y="433" width="3" height="43" fill="#ff0000"/>
<rect x="1019" y="472" width="1" height="67" fill="#000"/>
<rect x="1017" y="476" width="5" height="13" fill="#000"/>
<rect x="1018" y="477" width="3" height="11" fill="#ff0000"/>
<rect x="1027" y="467" width="1" height="74" fill="#000"/>
<rect x="1025" y="488" width="5" height="43" fill="#000"/>
<rect x="1026" y="489" width="3" height="41" fill="#ff0000"/>
<rect x="1035" y="515" width="1" height="49" fill="#000"/>
<rect x="1033" y="536" width="5" height="28" fill="#000"/>
<rect x="1034" y="537" width="3" height="26" fill="#ff0000"/>
<rect x="1043" y="529" width="1" height="31" fill="#000"/>
<rect x="1041" y="547" width="5" height="4" fill="#000"/>
<rect x="1042" y="548" width="3" height="2" fill="#ff0000"/>
<rect x="1051" y="547" width="1" height="47" fill="#000"/>
<rect x="1049" y="552" width="5" height="9" fill="#000"/>
<rect x="1050" y="553" width="3" height="7" fill="#ff0000"/>
<rect x="1059" y="542" width="1" height="28" fill="#000"/>
<rect x="1057" y="551" width="5" height="15" fill="#000"/>
<rect x="1058" y="552" width="3" height="13" fill="#00ff7f"/>
<rect x="1067" y="517" width="1" height="48" fill="#000"/>
<rect x="1065" y="552" width="5" height="11" fill="#000"/>
<rect x="1066" y="553" width="3" height="9" fill="#00ff7f"/>
<rect x="1075" y="532" width="1" height="32" fill="#000"/>
<rect x="1073" y="551" width="5" height="3" fill="#000"/>
<rect x="1074" y="552" width="3" height="1" fill="#00ff7f"/>
<rect x="1083" y="525" width="1" height="35" fill="#000"/>
<rect x="1081" y="532" width="5" height="20" fill="#000"/>
<rect x="1082" y="533" width="3" height="18" fill="#00ff7f"/>
<rect x="1091" y="523" width="1" height="42" fill="#000"/>
<rect x="1089" y="532" width="5" height="3" fill="#000"/>
<rect x="1090" y="533" width="3" height="1" fill="#ff0000"/>
<rect x="1099" y="513" width="1" height="34" fill="#000"/>
<rect x="1097" y="536" width="5" height="8" fill="#000"/>
<rect x="1098" y="537" width="3" height="6" fill="#00ff7f"/>
<rect x="1107" y="519" width="1" height="32" fill="#000"/>
<rect x="1105" y="523" width="5" height="20" fill="#000"/>
<rect x="1106" y="524" width="3" height="18" fill="#00ff7f"/>
<rect x="1115" y="503" width="1" height="34" fill="#000"/>
<rect x="1113" y="532" width="5" height="1" fill="#000"/>
<rect x="1123" y="499" width="1" height="20" fill="#000"/>
<rect x="1121" y="499" width="5" height="6" fill="#000"/>
<rect x="1122" y="500" width="3" height="4" fill="#ff0000"/>
<rect x="1131" y="500" width="1" height="21" fill="#000"/>
<rect x="1129" y="509" width="5" height="9" fill="#000"/>
<rect x="1130" y="510" width="3" height="7" fill="#ff0000"/>
<rect x="1139" y="484" width="1" height="33" fill="#000"/>
<rect x="1137" y="500" width="5" height="5" fill="#000"/>
<rect x="1138" y="501" width="3" height="3" fill="#00ff7f"/>
<rect x="1147" y="472" width="1" height="55" fill="#000"/>
<rect x="1145" y="498" width="5" height="18" fill="#000"/>
<rect x="1146" y="499" width="3" height="16" fill="#ff0000"/>
<rect x="1155" y="485" width="1" height="64" fill="#000"/>
<rect x="1153" y="513" width="5" height="24" fill="#000"/>
<rect x="1154" y="514" width="3" height="22" fill="#ff0000"/>
<rect x="1163" y="529" width="1" height="32" fill="#000"/>
<rect x="1161" y="534" width="5" height="23" fill="#000"/>
<rect x="1162" y="535" width="3" height="21" fill="#ff0000"/>
<rect x="1171" y="544" width="1" height="39" fill="#000"/>
<rect x="1169" y="555" width="5" height="15" fill="#000"/>
<rect x="1170" y="556" width="3" height="13" fill="#ff0000"/>
<rect x="1179" y="566" width="1" height="76" fill="#000"/>
<rect x="1177" y="575" width="5" height="59" fill="#000"/>
<rect x="1178" y="576" width="3" height="57" fill="#ff0000"/>
<rect x="1187" y="609" width="1" height="36" fill="#000"/>
<rect x="1185" y="613" width="5" height="19" fill="#000"/>
<rect x="1186" y="614" width="3" height="17" fill="#00ff7f"/>
<rect x="1195" y="604" width="1" height="45" fill="#000"/>
<rect x="1193" y="613" width="5" height="30" fill="#000"/>
<rect x="1194" y="614" width="3" height="28" fill="#ff0000"/>
<rect x="1203" y="634" width="1" height="36" fill="#000"/>
<rect x="1201" y="644" width="5" height="17" fill="#000"/>
<rect x="1202" y="645" width="3" height="15" fill="#ff0000"/>
<rect x="1211" y="624" width="1" height="34" fill="#000"/>
<rect x="1209" y="630" width="5" height="21" fill="#000"/>
<rect x="1210" y="631" width="3" height="19" fill="#00ff7f"/>
<rect x="1219" y="605" width="1" height="39" fill="#000"/>
<rect x="1217" y="621" width="5" height="23" fill="#000"/>
<rect x="1218" y="622" width="3" height="21" fill="#00ff7f"/>
<rect x="1227" y="604" width="1" height="30" fill="#000"/>
<rect x="1225" y="609" width="5" height="20" fill="#000"/>
<rect x="1226" y="610" width="3" height="18" fill="#00ff7f"/>
<rect x="1235" y="592" width="1" height="50" fill="#000"/>
<rect x="1233" y="618" width="5" height="5" fill="#000"/>
<rect x="1234" y="619" width="3" height="3" fill="#ff0000"/>
<rect x="1243" y="584" width="1" height="47" fill="#000"/>
<rect x="1241" y="600" width="5" height="23" fill="#000"/>
<rect x="1242" y="601" width="3" height="21" fill="#00ff7f"/>
<rect x="1251" y="585" width="1" height="43" fill="#000"/>
<rect x="1249" y="599" width="5" height="21" fill="#000"/>
<rect x="1250" y="600" width="3" height="19" fill="#ff0000"/>
<rect x="1259" y="600" width="1" height="38" fill="#000"/>
<rect x="1257" y="619" width="5" height="1" fill="#000"/>
<rect x="1267" y="613" width="1" height="74" fill="#000"/>
<rect x="1265" y="616" width="5" height="57" fill="#000"/>
<rect x="1266" y="617" width="3" height="55" fill="#ff0000"/>
<rect x="1275" y="637" width="1" height="57" fill="#000"/>
<rect x="1273" y="678" width="5" height="16" fill="#000"/>
<rect x="1274" y="679" width="3" height="14" fill="#ff0000"/>
<rect x="1283" y="660" width="1" height="45" fill="#000"/>
<rect x="1281" y="668" width="5" height="34" fill="#000"/>
<rect x="1282" y="669" width="3" height="32" fill="#00ff7f"/>
<rect x="1291" y="660" width="1" height="21" fill="#000"/>
<rect x="1289" y="665" width="5" height="7" fill="#000"/>
<rect x="1290" y="666" width="3" height="5" fill="#00ff7f"/>
<rect x="1299" y="646" width="1" height="39" fill="#000"/>
<rect x="1297" y="655" width="5" height="13" fill="#000"/>
<rect x="1298" y="656" width="3" height="11" fill="#00ff7f"/>
<rect x="1307" y="573" width="1" height="93" fill="#000"/>
<rect x="1305" y="577" width="5" height="86" fill="#000"/>
<rect x="1306" y="578" width="3" height="84" fill="#00ff7f"/>
<rect x="1315" y="542" width="1" height="46" fill="#000"/>
<rect x="1313" y="547" width="5" height="32" fill="#000"/>
<rect x="1314" y="548" width="3" height="30" fill="#00ff7f"/>
<rect x="1323" y="531" width="1" height="41" fill="#000"/>
<rect x="1321" y="547" width="5" height="1" fill="#000"/>
<rect x="1331" y="522" width="1" height="31" fill="#000"/>
<rect x="1329" y="546" width="5" height="5" fill="#000"/>
<rect x="1330" y="547" width="3" height="3" fill="#00ff7f"/>
<rect x="1339" y="530" width="1" height="35" fill="#000"/>
<rect x="1337" y="538" width="5" height="17" fill="#000"/>
<rect x="1338" y="539" width="3" height="15" fill="#00ff7f"/>
<rect x="1347" y="496" width="1" height="51" fill="#000"/>
<rect x="1345" y="501" width="5" height="45" fill="#000"/>
<rect x="1346" y="502" width="3" height="43" fill="#00ff7f"/>
<rect x="1355" y="495" width="1" height="22" fill="#000"/>
<rect x="1353" y="505" width="5" height="9" fill="#000"/>
<rect x="1354" y="506" width="3" height="7" fill="#ff0000"/>
<rect x="1363" y="487" width="1" height="35" fill="#000"/>
<rect x="1361" y="502" width="5" height="18" fill="#000"/>
<rect x="1362" y="503" width="3" height="16" fill="#00ff7f"/>
<rect x="1371" y="481" width="1" height="36" fill="#000"/>
<rect x="1369" y="499" width="5" height="3" fill="#000"/>
<rect x="1370" y="500" width="3" height="1" fill="#00ff7f"/>
<rect x="1379" y="479" width="1" height="31" fill="#000"/>
<rect x="1377" y="494" width="5" height="13" fill="#000"/>
<rect x="1378" y="495" width="3" height="11" fill="#00ff7f"/>
<rect x="1387" y="449" width="1" height="65" fill="#000"/>
<rect x="1385" y="459" width="5" height="42" fill="#000"/>
<rect x="1386" y="460" width="3" height="40" fill="#00ff7f"/>
<rect x="1395" y="442" width="1" height="45" fill="#000"/>
<rect x="1393" y="461" width="5" height="8" fill="#000"/>
<rect x="1394" y="462" width="3" height="6" fill="#ff0000"/>
<rect x="1403" y="453" width="1" height="35" fill="#000"/>
<rect x="1401" y="470" width="5" height="7" fill="#000"/>
<rect x="1402" y="471" width="3" height="5" fill="#ff0000"/>
<rect x="1411" y="465" width="1" height="42" fill="#000"/>
<rect x="1409" y="476" width="5" height="17" fill="#000"/>
<rect x="1410" y="477" width="3" height="15" fill="#ff0000"/>
<rect x="1419" y="466" width="1" height="50" fill="#000"/>
<rect x="1417" y="492" width="5" height="8" fill="#000"/>
<rect x="1418" y="493" width="3" height="6" fill="#00ff7f"/>
<rect x="1427" y="479" width="1" height="26" fill="#000"/>
<rect x="1425" y="500" width="5" height="1" fill="#000"/>
<rect x="1435" y="486" width="1" height="34" fill="#000"/>
<rect x="1433" y="499" width="5" height="4" fill="#000"/>
<rect x="1434" y="500" width="3" height="2" fill="#00ff7f"/>
<rect x="1443" y="490" width="1" height="50" fill="#000"/>
<rect x="1441" y="504" width="5" height="18" fill="#000"/>
<rect x="1442" y="505" width="3" height="16" fill="#ff0000"/>
<rect x="1451" y="472" width="1" height="64" fill="#000"/>
<rect x="1449" y="480" width="5" height="48" fill="#000"/>
<rect x="1450" y="481" width="3" height="46" fill="#00ff7f"/>
<rect x="1459" y="446" width="1" height="43" fill="#000"/>
<rect x="1457" y="446" width="5" height="35" fill="#000"/>
<rect x="1458" y="447" width="3" height="33" fill="#00ff7f"/>
</svg>
<svg x="3" y="721" width="1843" height="100" viewBox="3 721 1843 100" overflow="hidden">
<polyline points="3.0,731.5 11.0,728.5 19.0,728.3 27.0,728.5 35.0,730.0 43.0,733.5 51.0,751.0 59.0,762.5 67.0,770.8 75.0,778.6 83.0,772.7 91.0,792.6 99.0,790.9 107.0,804.7 115.0,792.4 123.0,780.3 131.0,749.5 139.0,756.2 147.0,777.9 155.0,801.5 163.0,812.1 171.0,796.3 179.0,791.1 187.0,782.0 195.0,792.0 203.0,782.5 211.0,771.2 219.0,755.2 227.0,767.0 235.0,754.1 243.0,752.0 251.0,752.9 259.0,764.7 267.0,771.9 275.0,773.1 283.0,761.3 291.0,760.8 299.0,747.1 307.0,755.8 315.0,759.6 323.0,765.3 331.0,765.6 339.0,768.0 347.0,759.7 355.0,777.4 363.0,761.9 371.0,785.4 379.0,781.1 387.0,796.1 395.0,803.3 403.0,794.0 411.0,778.7 419.0,752.3 427.0,736.3 435.0,731.0 443.0,731.1 451.0,733.2 459.0,738.3 467.0,756.6 475.0,778.0 483.0,801.1 491.0,809.7 499.0,810.2 507.0,794.2 515.0,787.2 523.0,789.7 531.0,810.5 539.0,810.1 547.0,805.5 555.0,793.6 563.0,782.8 571.0,755.1 579.0,735.2 587.0,732.2 595.0,742.0 603.0,766.6 611.0,790.3 619.0,811.7 627.0,818.0 635.0,809.4 643.0,797.9 651.0,786.0 659.0,770.0 667.0,750.8 675.0,736.3 683.0,744.7 691.0,751.4 699.0,751.3 707.0,769.3 715.0,790.7 723.0,809.0 731.0,811.8 739.0,815.3 747.0,817.8 755.0,805.1 763.0,793.3 771.0,776.2 779.0,768.3 787.0,748.4 795.0,741.1 803.0,735.6 811.0,749.9 819.0,758.7 827.0,783.5 835.0,778.8 843.0,760.6 851.0,744.8 859.0,740.0 867.0,738.1 875.0,737.8 883.0,736.6 891.0,740.4 899.0,748.6 907.0,780.7 915.0,807.4 923.0,814.0 931.0,813.2 939.0,812.5 947.0,815.8 955.0,815.6 963.0,810.5 971.0,801.0 979.0,782.4 987.0,764.1 995.0,745.4 1003.0,740.1 1011.0,751.6 1019.0,766.0 1027.0,796.3 1035.0,805.1 1043.0,815.7 1051.0,810.0 1059.0,799.0 1067.0,786.8 1075.0,777.4 1083.0,759.2 1091.0,754.2 1099.0,752.2 1107.0,754.1 1115.0,759.4 1123.0,746.5 1131.0,751.2 1139.0,743.4 1147.0,765.0 1155.0,782.0 1163.0,806.1 1171.0,811.5 1179.0,815.1 1187.0,810.0 1195.0,811.8 1203.0,810.6 1211.0,806.7 1219.0,789.7 1227.0,759.4 1235.0,747.4 1243.0,745.9 1251.0,760.9 1259.0,767.8 1267.0,794.6 1275.0,808.5 1283.0,806.6 1291.0,799.1 1299.0,782.3 1307.0,755.9 1315.0,734.8 1323.0,727.3 1331.0,731.1 1339.0,734.1 1347.0,733.1 1355.0,734.5 1363.0,737.6 1371.0,743.7 1379.0,743.3 1387.0,741.3 1395.0,745.3 1403.0,753.0 1411.0,770.9 1419.0,783.2 1427.0,794.5 1435.0,794.3 1443.0,797.0 1451.0,776.5 1459.0,751.1" fill="none" stroke="#20b2aa" stroke-width="1" shape-rendering="crispEdges"/><polyline points="3.0,752.8 11.0,739.0 19.0,732.0 27.0,729.0 35.0,729.5 43.0,732.0 51.0,738.5 59.0,748.5 67.0,761.4 75.0,770.6 83.0,774.0 91.0,781.3 99.0,785.4 107.0,796.1 115.0,796.0 123.0,792.4 131.0,774.1 139.0,762.0 147.0,761.2 155.0,778.5 163.0,797.2 171.0,803.3 179.0,799.8 187.0,789.8 195.0,788.4 203.0,785.5 211.0,781.9 219.0,769.6 227.0,764.5 235.0,758.8 243.0,757.7 251.0,753.0 259.0,756.5 267.0,763.2 275.0,769.9 283.0,768.8 291.0,765.1 299.0,756.4 307.0,754.6 315.0,754.2 323.0,760.2 331.0,763.5 339.0,766.3 347.0,764.4 355.0,768.4 363.0,766.3 371.0,774.9 379.0,776.2 387.0,787.6 395.0,793.5 403.0,797.8 411.0,792.0 419.0,775.0 427.0,755.8 435.0,739.9 443.0,732.8 451.0,731.8 459.0,734.2 467.0,742.7 475.0,757.6 483.0,778.5 491.0,796.3 499.0,807.0 507.0,804.7 515.0,797.2 523.0,790.3 531.0,795.8 539.0,803.4 547.0,808.7 555.0,803.1 563.0,794.0 571.0,777.1 579.0,757.7 587.0,740.8 595.0,736.4 603.0,746.9 611.0,766.3 619.0,789.5 627.0,806.6 635.0,813.0 643.0,808.4 651.0,797.8 659.0,784.6 667.0,768.9 675.0,752.3 683.0,743.9 691.0,744.1 699.0,749.1 707.0,757.3 715.0,770.4 723.0,789.7 731.0,803.8 739.0,812.0 747.0,815.0 755.0,812.7 763.0,805.4 771.0,791.5 779.0,779.3 787.0,764.3 795.0,752.6 803.0,741.7 811.0,742.2 819.0,748.1 827.0,764.0 835.0,773.7 843.0,774.3 851.0,761.4 859.0,748.4 867.0,741.0 875.0,738.6 883.0,737.5 891.0,738.3 899.0,741.9 907.0,756.6 915.0,778.9 923.0,800.7 931.0,811.5 939.0,813.2 947.0,813.8 955.0,814.7 963.0,814.0 971.0,809.0 979.0,798.0 987.0,782.5 995.0,764.0 1003.0,749.9 1011.0,745.7 1019.0,752.6 1027.0,771.3 1035.0,789.1 1043.0,805.7 1051.0,810.3 1059.0,808.2 1067.0,798.6 1075.0,787.7 1083.0,774.5 1091.0,763.6 1099.0,755.2 1107.0,753.5 1115.0,755.3 1123.0,753.4 1131.0,752.4 1139.0,747.0 1147.0,753.2 1155.0,763.5 1163.0,784.4 1171.0,799.9 1179.0,810.9 1187.0,812.2 1195.0,812.3 1203.0,810.8 1211.0,809.7 1219.0,802.3 1227.0,785.2 1235.0,765.5 1243.0,750.9 1251.0,751.4 1259.0,758.2 1267.0,774.4 1275.0,790.3 1283.0,803.2 1291.0,804.7 1299.0,796.0 1307.0,779.1 1315.0,757.7 1323.0,739.3 1331.0,731.1 1339.0,730.9 1347.0,732.8 1355.0,733.9 1363.0,735.1 1371.0,738.6 1379.0,741.5 1387.0,742.8 1395.0,743.3 1403.0,746.6 1411.0,756.4 1419.0,769.1 1427.0,782.9 1435.0,790.7 1443.0,795.3 1451.0,789.3 1459.0,774.9" fill="none" stroke="#ff0000" stroke-width="1" stroke-dasharray="3,3" shape-rendering="crispEdges"/>
</svg>
<path d="M1469,122 L1482,122 L1475.5,129 Z" fill="#000"/>
<path d="M1446,475 l3,0 l0,-1.5 l3,3.5 l-3,3.5 l0,-1.5 l-3,0 z" fill="#00e0ff"/>
<path d="M1446,493 l3,0 l0,-1.5 l3,3.5 l-3,3.5 l0,-1.5 l-3,0 z" fill="#00e0ff"/>
<path d="M1452,477 q2,-12 10,-15" fill="none" stroke="#0000ff" stroke-dasharray="1.5,2"/>
<rect x="1448" y="539" width="7" height="1" fill="#ff0000"/>
<rect x="1447" y="416" width="8" height="1" fill="#0000ff"/>
<path d="M6,130 L15,130 L10.5,135 Z" fill="#000"/>
</svg>
<div class="t" style="left:21px;top:127px;font-size:12px;letter-spacing:0.25px">NZDUSD!,Daily&nbsp; 0.57935 0.58274 0.57853 0.58273</div>
<div class="t" style="left:8px;top:726px;font-size:12px;letter-spacing:0.45px">Stoch(5,3,3) 70.5357 46.5722</div>
<div class="t" style="left:11.5px;top:404px;font-size:12px;letter-spacing:0.5px">#8947279 tp</div>
<div class="t" style="left:11.5px;top:465px;font-size:12px;letter-spacing:0.5px">#8947279 sl</div>
<div class="t" style="left:11.5px;top:465px;font-size:12px;letter-spacing:0.5px">#8947279 buy 0.30</div>
<div class="t" style="left:1754px;top:185px;font-size:35.5px;letter-spacing:-1px;color:#bdb76b">+31.3</div>
<div class="t pl" style="top:155px">0.61115</div>
<div class="t pl" style="top:204px">0.60625</div>
<div class="t pl" style="top:253px">0.60140</div>
<div class="t pl" style="top:302px">0.59650</div>
<div class="t pl" style="top:351px">0.59165</div>
<div class="t pl" style="top:400px">0.58675</div>
<div class="t pl" style="top:449px">0.58190</div>
<div class="t pl" style="top:498px">0.57700</div>
<div class="t pl" style="top:547px">0.57215</div>
<div class="t pl" style="top:595px">0.56725</div>
<div class="t pl" style="top:644px">0.56240</div>
<div class="t pl" style="top:693px">0.55750</div>
<div class="a" style="left:1847px;top:440px;width:56px;height:12px;background:#000"></div>
<div class="t pl" style="top:441px;color:#fff;left:1849px">0.58273</div>
<div class="t" style="left:1850px;top:724px;font-size:12px">100</div>
<div class="t" style="left:1850px;top:736px;font-size:12px">80</div>
<div class="t" style="left:1850px;top:796px;font-size:12px">20</div>
<div class="t" style="left:1850px;top:809px;font-size:12px">0</div>
<div class="t tl" style="left:1.5px">14 Apr 2025</div>
<div class="t tl" style="left:97.5px">30 Apr 2025</div>
<div class="t tl" style="left:193.5px">16 May 2025</div>
<div class="t tl" style="left:289.5px">3 Jun 2025</div>
<div class="t tl" style="left:385.5px">19 Jun 2025</div>
<div class="t tl" style="left:481.5px">7 Jul 2025</div>
<div class="t tl" style="left:577.5px">23 Jul 2025</div>
<div class="t tl" style="left:673.5px">8 Aug 2025</div>
<div class="t tl" style="left:769.5px">26 Aug 2025</div>
<div class="t tl" style="left:865.5px">11 Sep 2025</div>
<div class="t tl" style="left:961.5px">29 Sep 2025</div>
<div class="t tl" style="left:1057.5px">15 Oct 2025</div>
<div class="t tl" style="left:1153.5px">30 Oct 2025</div>
<div class="t tl" style="left:1249.5px">17 Nov 2025</div>
<div class="t tl" style="left:1345.5px">3 Dec 2025</div>
<div class="t tl" style="left:1441.5px">19 Dec 2025</div>

<!-- bottom tabs -->
<div class="a" style="left:0;top:847px;width:1101px;height:1px;background:#000"></div><div class="a" style="left:1229px;top:847px;width:689px;height:1px;background:#000"></div>
<div class="t tab" style="left:19px;letter-spacing:-0.93px">CHFJPY!,Weekly</div>
<div class="tsep" style="left:137px"></div>
<div class="t tab" style="left:150px;letter-spacing:-0.5px">CADCHF!,Daily</div>
<div class="tsep" style="left:261px"></div>
<div class="t tab" style="left:274px;letter-spacing:-0.88px">CHFJPY!,Daily</div>
<div class="tsep" style="left:377px"></div>
<div class="t tab" style="left:390px;letter-spacing:-0.57px">USDCHF!,Daily</div>
<div class="tsep" style="left:501px"></div>
<div class="t tab" style="left:514px;letter-spacing:-0.23px">NZDUSD!,Daily</div>
<div class="tsep" style="left:629px"></div>
<div class="t tab" style="left:643px;letter-spacing:-0.58px">USDDKK!,H4</div>
<div class="tsep" style="left:742px"></div>
<div class="t tab" style="left:755px;letter-spacing:-0.58px">USDDKK!,H1</div>
<div class="tsep" style="left:853px"></div>
<div class="t tab" style="left:866px;letter-spacing:-0.56px">USDDKK!,M15</div>
<div class="tsep" style="left:974px"></div>
<div class="t tab" style="left:986px;letter-spacing:-0.47px">AUDUSD!,Daily</div>
<div class="a" style="left:1101px;top:847px;width:129px;height:24px;background:#fff;border:1px solid #000;border-top:none"></div>
<div class="t tab" style="left:1114px;color:#000">NZDUSD!,Daily</div>
<svg class="a" style="left:1874px;top:852px" width="40" height="12"><path d="M9,2 L4,6 L9,10 Z M28,2 L33,6 L28,10 Z" fill="#a0a0a0"/></svg>
<!-- terminal -->
<div class="a" style="left:0;top:872px;width:1918px;height:1px;background:#dcdcdc"></div>
<svg class="a" style="left:3px;top:879px" width="11" height="10"><path d="M1,1 L10,9 M10,1 L1,9" stroke="#000" stroke-width="1.6"/></svg>
<div class="a" style="left:1px;top:895px;width:16px;height:33px;background:#a8c3e2"></div>
<div class="a" style="left:18px;top:877px;width:1894px;height:51px;background:#fff;border-top:1px solid #a0a0a0;border-left:1px solid #a0a0a0"></div>
<div class="a" style="left:19px;top:878px;width:1872px;height:26px;background:#fcfcfc;border-bottom:1px solid #e5e5e5"></div>
<div class="t th" style="left:25px">Ordine</div>
<div class="t th" style="right:1482.5px;letter-spacing:0.3px">Data/Orario</div>
<div class="t th" style="right:1333.5px;letter-spacing:0.3px">Tipo</div>
<div class="t th" style="right:1233.5px;letter-spacing:0.3px">Lotti</div>
<div class="t th" style="right:1105.5px;letter-spacing:0.3px">Simbolo</div>
<div class="t th" style="right:963.5px;letter-spacing:0.3px">Prezzo</div>
<div class="t th" style="right:821.5px;letter-spacing:0.3px">S / L</div>
<div class="t th" style="right:679.5px;letter-spacing:0.3px">Take profit</div>
<div class="t th" style="right:537.5px;letter-spacing:0.3px">Prezzo</div>
<div class="t th" style="right:396.5px;letter-spacing:0.3px">Commissione</div>
<div class="t th" style="right:257.5px;letter-spacing:0.3px">Swap</div>
<div class="t th" style="right:31.5px;letter-spacing:0.3px">Profitto</div>
<div class="cdiv" style="left:203px"></div>
<div class="cdiv" style="left:460px"></div>
<div class="cdiv" style="left:589px"></div>
<div class="cdiv" style="left:689px"></div>
<div class="cdiv" style="left:817px"></div>
<div class="cdiv" style="left:959px"></div>
<div class="cdiv" style="left:1101px"></div>
<div class="cdiv" style="left:1243px"></div>
<div class="cdiv" style="left:1385px"></div>
<div class="cdiv" style="left:1527px"></div>
<div class="cdiv" style="left:1669px"></div>
<svg class="a" style="left:446px;top:886px" width="9" height="8"><path d="M0.5,0.5 L8.5,0.5 L4.5,7.5 Z" fill="none" stroke="#888"/></svg>
<div class="t td" style="left:46px">8947279</div>
<div class="t td" style="right:1461px">2025.12.22 23:45:05</div>
<div class="t td" style="right:1333px">buy</div>
<div class="t td" style="right:1233px">0.30</div>
<div class="t td" style="right:1105px">nzdusd!</div>
<div class="t td" style="right:963px">0.57960</div>
<div class="t td" style="right:821px">0.57960</div>
<div class="t td" style="right:680px">0.58570</div>
<div class="t td" style="right:538px">0.58273</div>
<div class="t td" style="right:396px">-1.80</div>
<div class="t td" style="right:253px">-0.76</div>
<div class="t td" style="right:57px">79.69</div>
<svg class="a" style="left:22px;top:906px" width="20" height="22"><path d="M1.5,1.5 L10,1.5 L14,5.5 L14,18.5 L1.5,18.5 Z" fill="#f8f8f8" stroke="#555"/><circle cx="14.5" cy="17" r="4.5" fill="#1e90e8"/></svg>
<svg class="a" style="left:1872px;top:910px" width="13" height="13"><path d="M1,1 L12,12 M12,1 L1,12" stroke="#777" stroke-width="1.6"/></svg>
<div class="a" style="left:1891px;top:877px;width:21px;height:51px;background:#f0f0f0;border:1px solid #c8c8c8"></div>
<div class="a" style="left:1892px;top:878px;width:19px;height:20px;background:#fff"></div>
<svg class="a" style="left:1896px;top:884px" width="11" height="7"><path d="M1,6 L5.5,1.5 L10,6" stroke="#333" fill="none" stroke-width="1.3"/></svg>
<div class="a" style="left:1892px;top:899px;width:19px;height:29px;background:#dadada;border-top:1px solid #b0b0b0"></div>
<svg class="a" style="left:1896px;top:909px" width="11" height="11"><path d="M0,1.5 H10 M0,5.5 H10 M0,9.5 H10" stroke="#555" stroke-width="1.5"/></svg>
<div class="a" style="left:1912px;top:872px;width:6px;height:56px;background:#f0f0f0"></div>
</body></html>
